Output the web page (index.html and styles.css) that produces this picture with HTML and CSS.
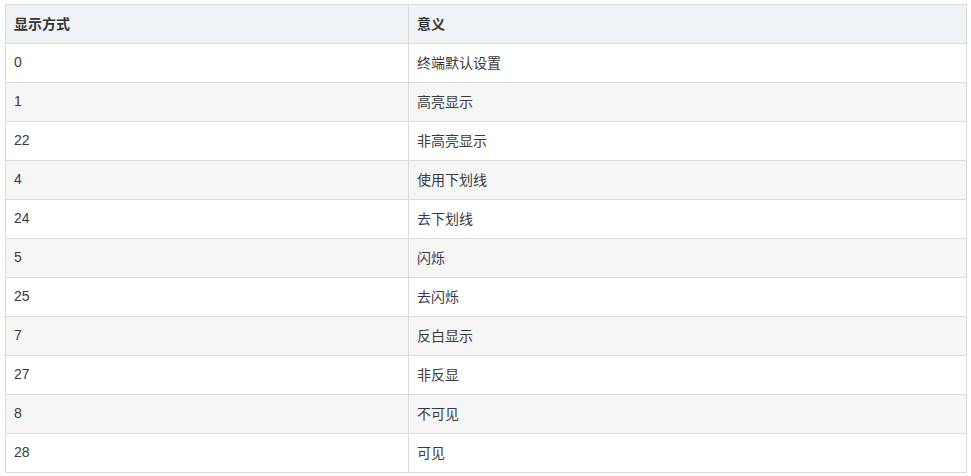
FILE: index.html
```html
<!DOCTYPE html>
<html>
<head>
<meta charset="utf-8">
<link rel="stylesheet" href="styles.css">
</head>
<body>
<div class="wrap">
<table class="tbl">
<colgroup><col class="c1"><col class="c2"></colgroup>
<thead>
<tr><th>显示方式</th><th>意义</th></tr>
</thead>
<tbody>
<tr><td>0</td><td>终端默认设置</td></tr>
<tr><td>1</td><td>高亮显示</td></tr>
<tr><td>22</td><td>非高亮显示</td></tr>
<tr><td>4</td><td>使用下划线</td></tr>
<tr><td>24</td><td>去下划线</td></tr>
<tr><td>5</td><td>闪烁</td></tr>
<tr><td>25</td><td>去闪烁</td></tr>
<tr><td>7</td><td>反白显示</td></tr>
<tr><td>27</td><td>非反显</td></tr>
<tr><td>8</td><td>不可见</td></tr>
<tr><td>28</td><td>可见</td></tr>
</tbody>
</table>
</div>
</body>
</html>
```
FILE: styles.css
```css
html, body {
  margin: 0;
  padding: 0;
  background: #fff;
}
.wrap {
  padding: 4px 0 0 5px;
}
.tbl {
  border-collapse: collapse;
  table-layout: fixed;
  width: 962px;
  font-family: "Liberation Sans", "Noto Sans CJK SC", sans-serif;
  font-size: 14px;
  color: #3a3a3a;
}
.c1 { width: 403px; }
.tbl th, .tbl td {
  border: 1px solid #dcdcdc;
  height: 39px;
  padding: 0 8px 2px;
  text-align: left;
  vertical-align: middle;
  box-sizing: border-box;
}
.tbl th {
  background: #eff3f5;
  font-weight: bold;
  color: #333;
}
.tbl tbody tr:nth-child(even) td {
  background: #f6f6f6;
}
```
